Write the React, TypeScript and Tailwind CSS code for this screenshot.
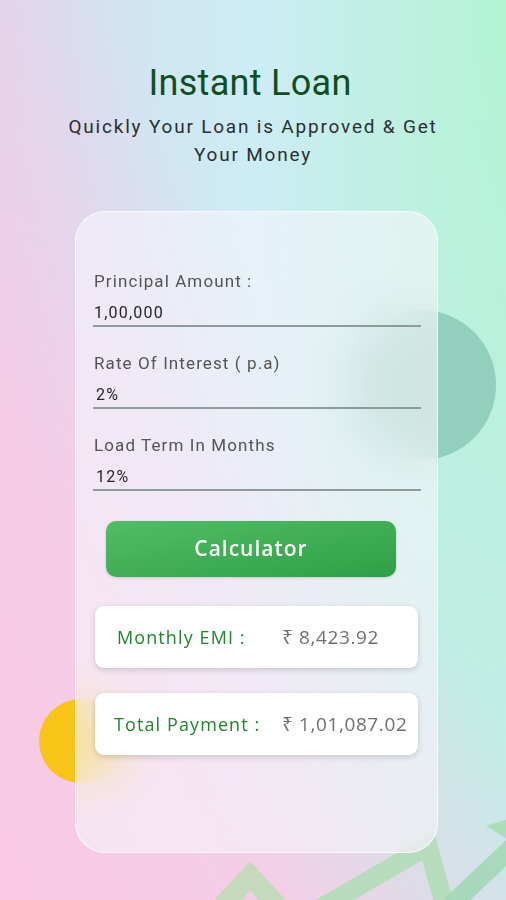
import React from 'react';

// Eingabefelder der Rechner-Karte
const fields = [
  { label: 'Principal Amount :', value: '1,00,000', valuePad: 'pl-[1px]' },
  { label: 'Rate Of Interest ( p.a)', value: '2%', valuePad: 'pl-[3px]' },
  { label: 'Load Term In Months', value: '12%', valuePad: 'pl-[3px]' },
];

function Field({ label, value, valuePad, first }: { label: string; value: string; valuePad: string; first?: boolean }) {
  return (
    <div className={first ? '' : 'mt-[25px]'}>
      <div className="pl-[1px] text-[17px] leading-[22px] tracking-[1.1px] text-[#545454]">{label}</div>
      <div className={`mt-[10px] pb-[1px] text-[16px] leading-[22px] tracking-[1.2px] text-[#262626] border-b-2 border-[#8f9a9a] ${valuePad}`}>
        {value}
      </div>
    </div>
  );
}

function ResultRow({ label, value, labelClass }: { label: string; value: string; labelClass: string }) {
  return (
    <div className="flex items-center h-[62px] rounded-[9px] bg-white shadow-[0_2px_6px_rgba(0,0,0,0.16)]">
      <span className={`text-[18px] font-medium tracking-[1.1px] text-[#21862f] ${labelClass}`}>{label}</span>
      <span className="text-[19px] tracking-[0.6px] text-[#707070]">{value}</span>
    </div>
  );
}

export default function App() {
  return (
    <div
      className="relative w-[506px] h-[900px] overflow-hidden bg-[linear-gradient(to_right,#ddd7ec_0%,#d0e6f3_30%,#cdecf5_50%,#bff0e2_78%,#b2f4d3_100%)]"
      style={{ fontFamily: 'Roboto, "Noto Sans", sans-serif' }}
    >
      {/* Verlauf unten rechts (cyan) und unten links (rosa) */}
      <div className="absolute inset-0 bg-[linear-gradient(to_top_left,rgba(196,236,234,1)_0%,rgba(196,236,234,0)_50%)]" />
      <div className="absolute inset-0 bg-[linear-gradient(to_top_right,rgba(249,200,228,1)_0%,rgba(247,203,230,0.9)_28%,rgba(240,210,235,0)_60%)]" />

      {/* Deko-Kreise hinter der Karte */}
      <div className="absolute left-[346px] top-[310px] w-[150px] h-[150px] rounded-full bg-[#93cfbd]" />
      <div className="absolute left-[39px] top-[699px] w-[84px] h-[84px] rounded-full bg-[#f8c418]" />

      {/* Chart-Linie unten rechts */}
      <svg className="absolute left-0 top-[800px]" width="506" height="100" viewBox="0 800 506 100">
        <polyline points="205,925 250,876 300,930" fill="none" stroke="#bcdcb4" strokeWidth="20" opacity="0.85" />
        <polyline points="300,920 428,846 446,910" fill="none" stroke="#b2dcb8" strokeWidth="19" opacity="0.9" />
        <polyline points="446,910 520,840" fill="none" stroke="#a3d7b6" strokeWidth="19" opacity="0.9" />
        <polygon points="486,826 512,818 512,842" fill="#a8dcb4" opacity="0.9" />
      </svg>

      <div className="relative flex flex-col items-center">
        <h1 className="mt-[61px] ml-[-6px] text-[36px] leading-[44px] tracking-[0.3px] text-[#124d22]">Instant Loan</h1>
        <p className="mt-[8px] text-center text-[19px] leading-[28px] tracking-[1.8px] text-[#2b2f33]">
          Quickly Your Loan is Approved &amp; Get
          <br />
          Your Money
        </p>

        {/* Rechner-Karte mit Milchglas-Effekt */}
        <div className="mt-[42px] ml-[7px] w-[363px] h-[642px] rounded-[30px] border border-white/70 bg-[#f6f5fc]/60 backdrop-blur-xl pt-[58px] pl-[17px] pr-[16px]">
          {fields.map((f, i) => (
            <Field key={f.label} {...f} first={i === 0} />
          ))}

          <div className="mt-[30px] flex justify-center pr-[12px]">
            <button
              className="w-[290px] h-[56px] rounded-[10px] bg-[linear-gradient(to_bottom_right,#52bd63,#2f9f47)] text-white text-[21px] font-semibold tracking-[1px] shadow-[0_1px_3px_rgba(0,0,0,0.15)]"
              style={{ fontFamily: '"Open Sans", sans-serif' }}
            >
              Calculator
            </button>
          </div>

          <div className="mt-[29px] pl-[2px] pr-[3px]" style={{ fontFamily: '"Open Sans", "Noto Sans", sans-serif' }}>
            <ResultRow label="Monthly EMI :" value="₹ 8,423.92" labelClass="pl-[22px] w-[187px]" />
            <div className="mt-[25px]">
              <ResultRow label="Total Payment :" value="₹ 1,01,087.02" labelClass="pl-[19px] w-[187px]" />
            </div>
          </div>
        </div>
      </div>
    </div>
  );
}
